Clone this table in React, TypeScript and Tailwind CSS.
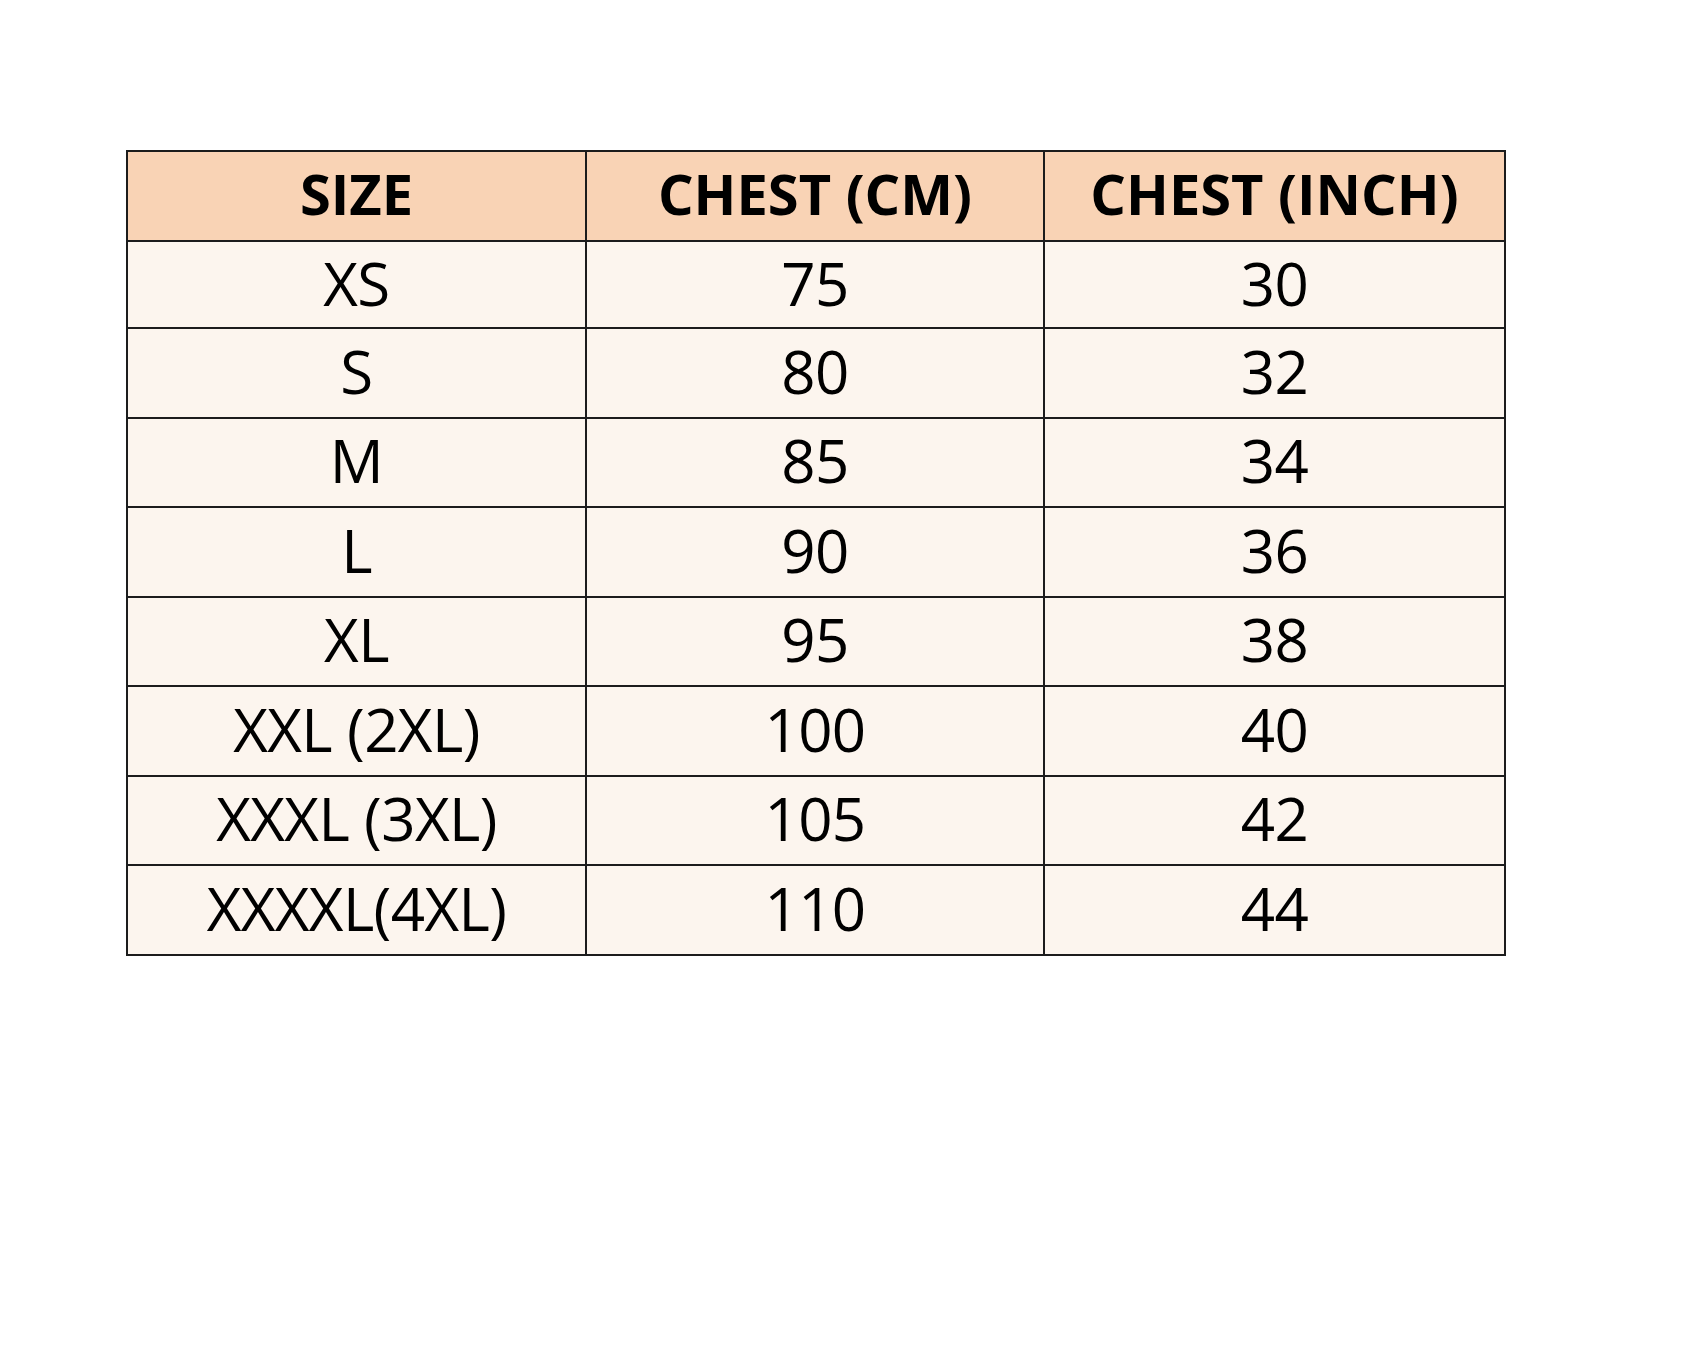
import React from "react";

const rows: [string, string, string][] = [
  ["XS", "75", "30"],
  ["S", "80", "32"],
  ["M", "85", "34"],
  ["L", "90", "36"],
  ["XL", "95", "38"],
  ["XXL (2XL)", "100", "40"],
  ["XXXL (3XL)", "105", "42"],
  ["XXXXL(4XL)", "110", "44"],
];

export default function App() {
  return (
    <div
      className="w-[1696px] h-[1356px] bg-white pt-[150px] pl-[126px]"
      style={{ fontFamily: '"Open Sans", "Noto Sans", sans-serif' }}
    >
      <table className="border-collapse w-[1378px] table-fixed text-black">
        <colgroup>
          <col className="w-[459px]" />
          <col className="w-[458px]" />
          <col className="w-[461px]" />
        </colgroup>
        <thead>
          <tr className="h-[90px] bg-[#f9d3b5]">
            {["SIZE", "CHEST (CM)", "CHEST (INCH)"].map((h) => (
              <th
                key={h}
                className="border-2 border-[#1c1c1c] p-0 pb-[7px] text-center align-middle text-[56px] font-bold leading-none"
              >
                {h}
              </th>
            ))}
          </tr>
        </thead>
        <tbody>
          {rows.map((r, i) => (
            <tr
              key={r[0]}
              className={`${i === 0 ? "h-[87px]" : "h-[89.5px]"} bg-[#fcf5ee]`}
            >
              {r.map((c, j) => (
                <td
                  key={j}
                  className="border-2 border-[#1c1c1c] p-0 pb-[4px] text-center align-middle text-[60px] font-normal leading-none tracking-[-0.01em]"
                >
                  {c}
                </td>
              ))}
            </tr>
          ))}
        </tbody>
      </table>
    </div>
  );
}
